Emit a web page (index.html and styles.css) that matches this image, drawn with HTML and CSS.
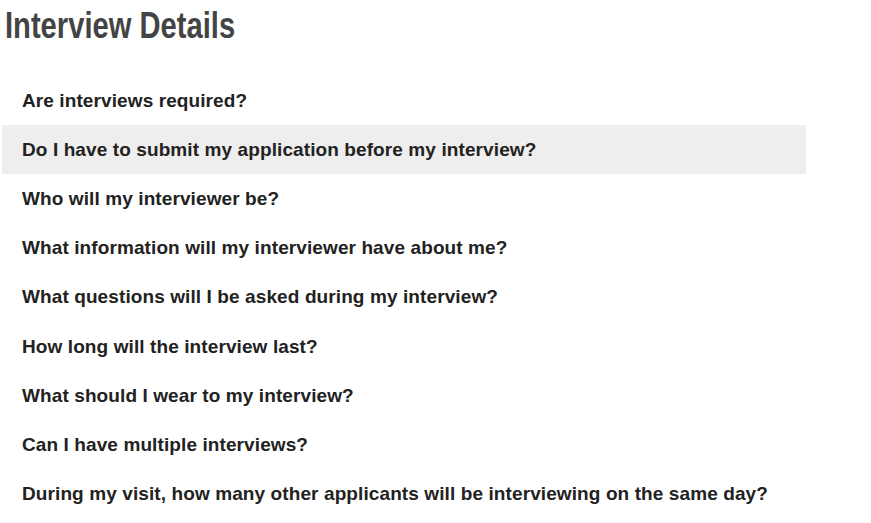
FILE: index.html
```html
<!DOCTYPE html>
<html>
<head>
<meta charset="utf-8">
<link rel="stylesheet" href="styles.css">
</head>
<body>
<div class="page">
  <h1 class="title"><span class="title-text">Interview Details</span></h1>
  <ul class="faq">
    <li class="faq-item">Are interviews required?</li>
    <li class="faq-item is-hover">Do I have to submit my application before my interview?</li>
    <li class="faq-item">Who will my interviewer be?</li>
    <li class="faq-item">What information will my interviewer have about me?</li>
    <li class="faq-item">What questions will I be asked during my interview?</li>
    <li class="faq-item">How long will the interview last?</li>
    <li class="faq-item">What should I wear to my interview?</li>
    <li class="faq-item">Can I have multiple interviews?</li>
    <li class="faq-item">During my visit, how many other applicants will be interviewing on the same day?</li>
  </ul>
</div>
</body>
</html>
```
FILE: styles.css
```css
html, body {
  margin: 0;
  padding: 0;
  background: #fff;
}
.page {
  padding: 0 0 0 2px;
  width: 804px;
}
.title {
  margin: 0;
  padding: 4px 0 0 3px;
  height: 76px;
  box-sizing: border-box;
  font-family: "Liberation Sans", Arial, sans-serif;
  font-weight: bold;
  font-size: 36px;
  line-height: 44px;
  color: #444;
}
.title-text {
  display: inline-block;
  transform: scaleX(0.81);
  transform-origin: left center;
}
.faq {
  list-style: none;
  margin: 0;
  padding: 0;
}
.faq-item {
  height: 49.2px;
  display: flex;
  align-items: center;
  padding-left: 20px;
  font-family: "Liberation Sans", Arial, sans-serif;
  font-weight: bold;
  font-size: 19px;
  letter-spacing: 0.1px;
  color: #222;
}
.faq-item.is-hover {
  background: #eee;
}
```
